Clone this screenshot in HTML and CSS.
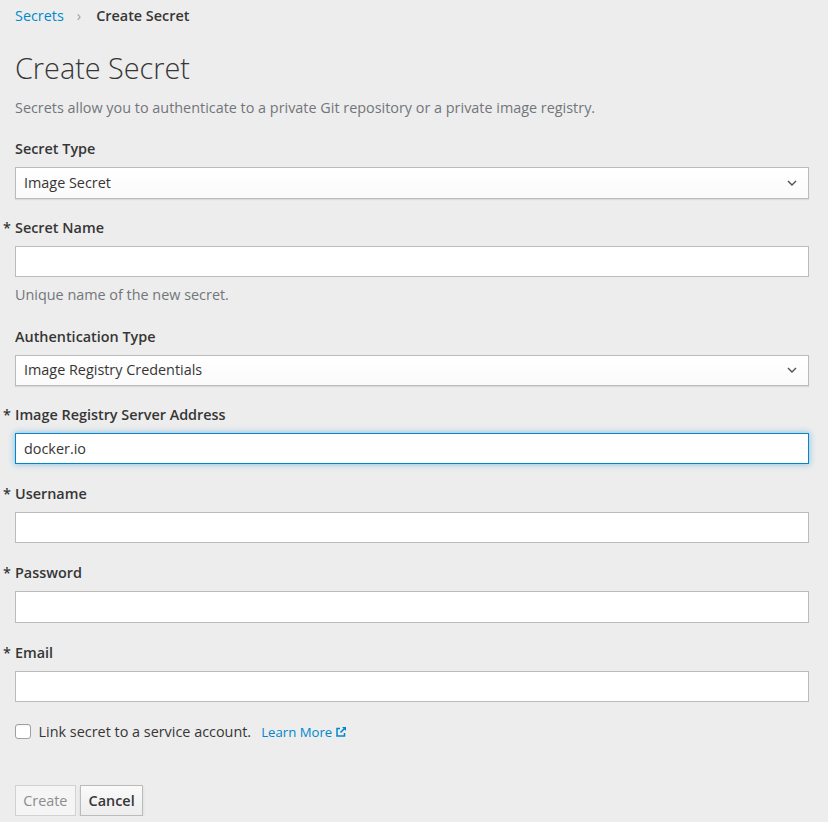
FILE: index.html
```html
<!DOCTYPE html>
<html>
<head>
<meta charset="utf-8">
<link rel="stylesheet" href="styles.css">
</head>
<body>
<div class="page">
  <nav class="breadcrumb">
    <a class="crumb-link" href="#">Secrets</a>
    <span class="crumb-sep">›</span>
    <span class="crumb-current">Create Secret</span>
  </nav>
  <h1 class="title">Create Secret</h1>
  <p class="lead">Secrets allow you to authenticate to a private Git repository or a private image registry.</p>

  <div class="group sel-group">
    <label class="label">Secret Type</label>
    <div class="select"><span>Image Secret</span>
      <svg class="chev" width="10" height="6" viewBox="0 0 10 6"><path d="M1 1 L5 5 L9 1" fill="none" stroke="#4d5258" stroke-width="1.4"/></svg>
    </div>
  </div>

  <div class="group">
    <label class="label req">Secret Name</label>
    <div class="input"></div>
    <div class="help">Unique name of the new secret.</div>
  </div>

  <div class="group sel-group">
    <label class="label">Authentication Type</label>
    <div class="select"><span>Image Registry Credentials</span>
      <svg class="chev" width="10" height="6" viewBox="0 0 10 6"><path d="M1 1 L5 5 L9 1" fill="none" stroke="#4d5258" stroke-width="1.4"/></svg>
    </div>
  </div>

  <div class="group">
    <label class="label req">Image Registry Server Address</label>
    <div class="input focus">docker.io</div>
  </div>

  <div class="group">
    <label class="label req">Username</label>
    <div class="input"></div>
  </div>

  <div class="group">
    <label class="label req">Password</label>
    <div class="input"></div>
  </div>

  <div class="group">
    <label class="label req">Email</label>
    <div class="input"></div>
  </div>

  <div class="check-row">
    <span class="checkbox"></span>
    <span class="check-text">Link secret to a service account.</span>
    <a class="learn" href="#">Learn More
      <svg width="12" height="12" viewBox="0 0 12 12"><path d="M5 2.5 H2 V10 H9.5 V7" fill="none" stroke="#0088ce" stroke-width="1.5"/><path d="M7 1 H11 V5 Z" fill="#0088ce"/><path d="M10.5 1.5 L5.5 6.5" stroke="#0088ce" stroke-width="1.6"/></svg>
    </a>
  </div>

  <div class="buttons">
    <button class="btn disabled">Create</button>
    <button class="btn">Cancel</button>
  </div>
</div>
</body>
</html>
```
FILE: styles.css
```css
html, body {
  margin: 0;
  padding: 0;
  background: #ededed;
}
body {
  font-family: "Open Sans", "Liberation Sans", sans-serif;
  font-size: 14.4px;
  line-height: 24px;
  color: #363636;
}
.page {
  padding: 4.4px 19px 0 15px;
}
.breadcrumb {
  display: flex;
  align-items: center;
  height: 24px;
  line-height: 24px;
}
.crumb-link {
  color: #0088ce;
  text-decoration: none;
}
.crumb-sep {
  color: #9c9c9c;
  margin: 0 15px 0 13px;
}
.crumb-current {
  font-weight: 600;
}
.title {
  margin: 23.6px 0 0;
  font-size: 28.8px;
  font-weight: 300;
  line-height: 31.7px;
  color: #363636;
}
.lead {
  margin: 12.4px 0 17.3px;
  color: #72767b;
  line-height: 24px;
}
.group {
  margin-bottom: 18px;
}
.group.sel-group {
  margin-bottom: 17px;
}
.label {
  display: block;
  position: relative;
  font-weight: 600;
  line-height: 24px;
  margin-bottom: 6px;
}
.label.req::before {
  content: "*";
  position: absolute;
  left: -12px;
  top: 0;
}
.select, .input {
  box-sizing: border-box;
  height: 31.2px;
  border: 1px solid #bbb;
  background: #fff;
  display: flex;
  align-items: center;
  padding: 0 8px;
}
.select {
  background: linear-gradient(#fff, #fafafa);
  justify-content: space-between;
  box-shadow: 0 1px 1px rgba(3,3,3,0.08);
  padding-right: 11px;
}
.input.focus {
  border-color: #0088ce;
  box-shadow: 0 0 6px 1px rgba(0,136,206,0.35);
}
.help {
  color: #72767b;
  margin-top: 6px;
  line-height: 24px;
}
.check-row {
  display: flex;
  align-items: center;
  height: 24px;
}
.checkbox {
  box-sizing: border-box;
  width: 15.6px;
  height: 15.6px;
  border: 1px solid #a0a0a0;
  border-radius: 3px;
  background: #fff;
  margin-right: 8px;
  box-shadow: inset 0 1px 1px rgba(0,0,0,0.05);
}
.check-text {
  color: #363636;
}
.learn {
  margin-left: 10px;
  color: #0088ce;
  text-decoration: none;
  font-size: 13.2px;
  display: flex;
  align-items: center;
  gap: 3px;
}
.buttons {
  margin-top: 41.5px;
  display: flex;
  gap: 4.8px;
}
.btn {
  font-family: inherit;
  font-size: 14.4px;
  font-weight: 600;
  height: 30.5px;
  padding: 0 7.2px;
  border: 1px solid #bbb;
  background: linear-gradient(#fafafa, #ededed);
  color: #363636;
  box-shadow: 0 2px 3px rgba(3,3,3,0.1);
}
.btn.disabled {
  background: #f5f5f5;
  border-color: #d1d1d1;
  color: #8b8d8f;
  font-weight: 400;
  box-shadow: none;
}
```
